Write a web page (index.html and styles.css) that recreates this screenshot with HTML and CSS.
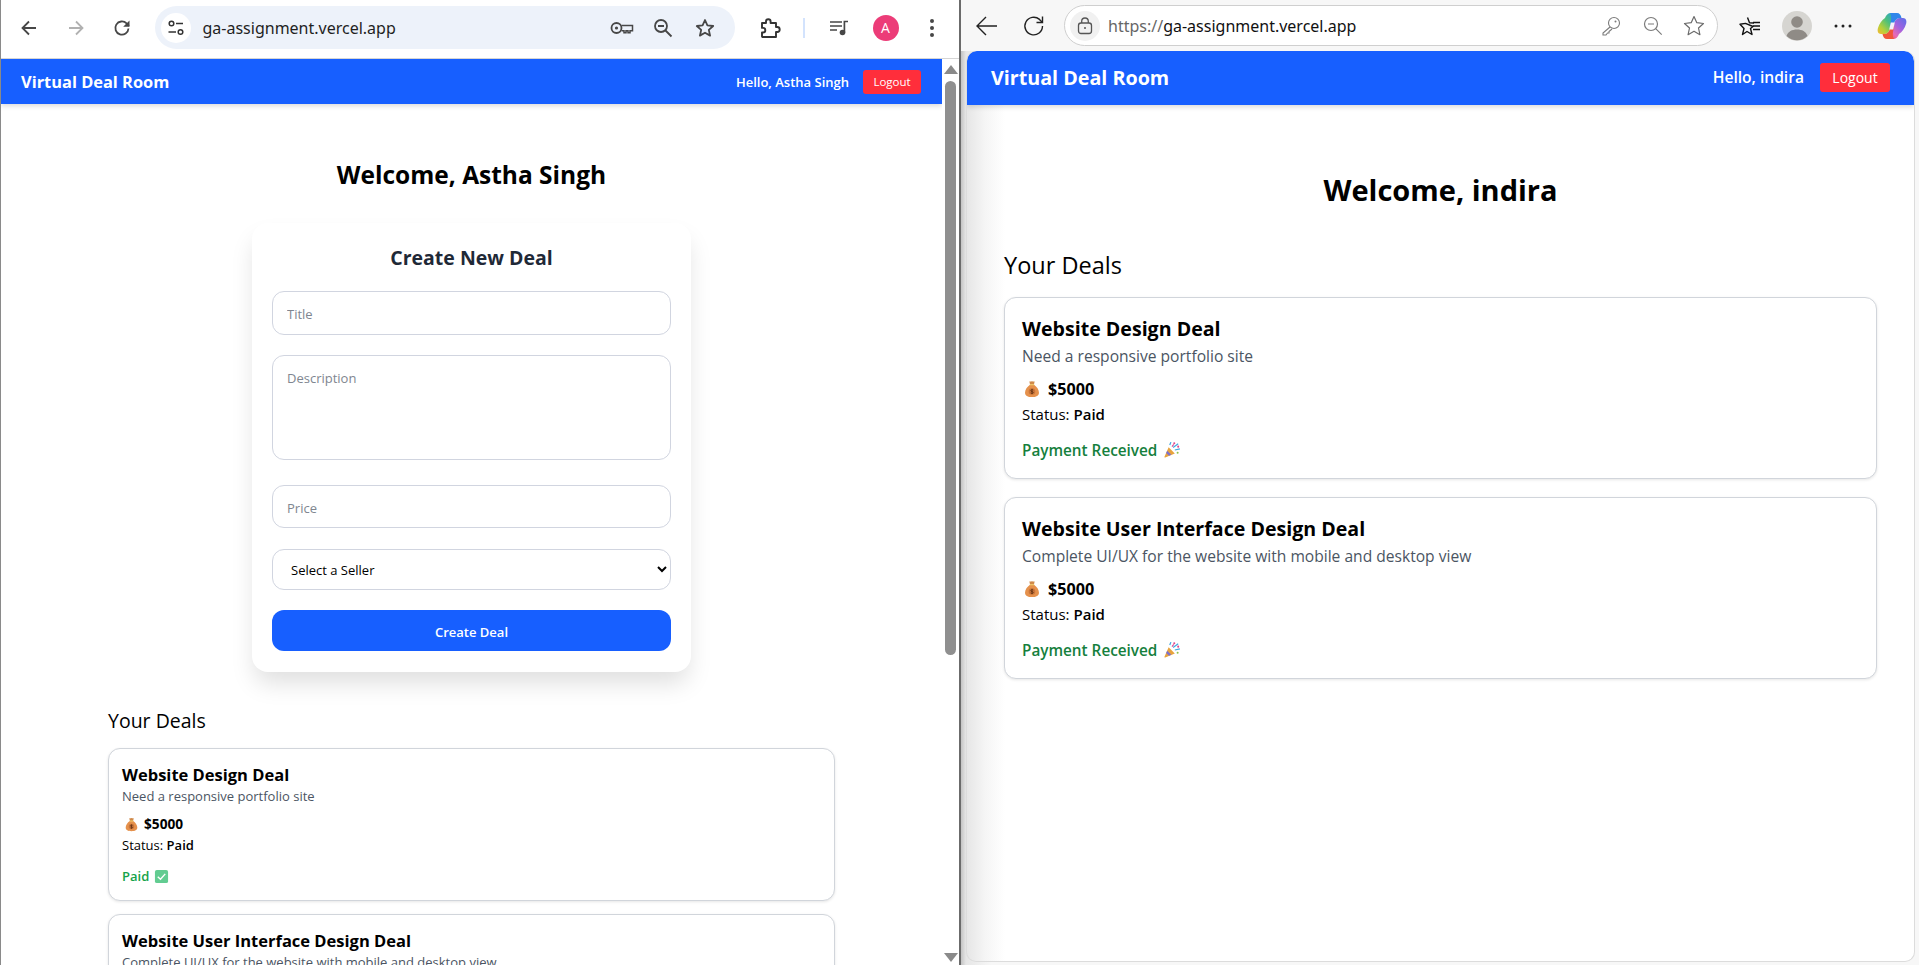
FILE: index.html
```html
<!DOCTYPE html>
<html lang="en">
<head>
  <meta charset="UTF-8" />
  <meta name="viewport" content="width=device-width, initial-scale=1.0" />
  <title>Virtual Deal Room</title>
  <link rel="stylesheet" href="styles.css">
</head>
<body>
  <svg class="defs" width="0" height="0" aria-hidden="true">
    <symbol id="money-bag" viewBox="0 0 16 16">
      <path d="M5.6 1.2c.8.5 1.6-.2 2.4-.2s1.6.7 2.4.2L9.7 4.2H6.3z" fill="#d08a4a"/>
      <path d="M6.2 4.3h3.6C12.3 6 14.2 8.7 14.2 11.3c0 2.8-2.5 3.9-6.2 3.9s-6.2-1.1-6.2-3.9C1.800 8.7 3.700 6 6.200 4.300z" fill="#e5914c"/>
      <rect x="6" y="3.7" width="4" height="1" rx=".5" fill="#f4cf6a"/>
      <circle cx="8" cy="10.2" r="2.9" fill="#c9743a"/>
      <path d="M9.1 9c-.6-.5-2.2-.5-2.2.5s2.2.6 2.2 1.600-1.700 1-2.300.4M8 7.900v4.600" fill="none" stroke="#5a2d10" stroke-width=".7"/>
    </symbol>
    <symbol id="party" viewBox="0 0 16 16">
      <path d="M5 5.500 10.500 11 2 14.700c-.5.200-.9-.2-.7-.7z" fill="#e8a33d"/>
      <path d="M3.700 8.600 7.400 12.300 5.400 13.200 2.800 10.600z" fill="#7b6fd0"/>
      <path d="M6 3.500 7 1M9 5.700 13.500 2.500M10.500 8 15 7" stroke="#3fa9e0" stroke-width="1.100" fill="none"/>
      <circle cx="10" cy="2" r=".9" fill="#e0458b"/>
      <circle cx="13.500" cy="5" r=".9" fill="#e0458b"/>
      <circle cx="13" cy="10.500" r=".9" fill="#8ac249"/>
      <path d="M8 5 9.500 3" stroke="#e0458b" stroke-width="1"/>
    </symbol>
    <symbol id="check-box" viewBox="0 0 16 16">
      <rect x="1" y="1" width="14" height="14" rx="2" fill="#62cc91"/>
      <path d="M4 8.300 6.900 11 12 5.200" fill="none" stroke="#fff" stroke-width="1.500"/>
    </symbol>
  </svg>

  <section class="window chrome-window">
    <header class="toolbar chrome-bar">
      <span class="tool"><svg width="20" height="20" viewBox="0 0 20 20"><path d="M17 10H4M10 3.500 3.500 10l6.500 6.500" fill="none" stroke="#474747" stroke-width="1.800"/></svg></span>
      <span class="tool"><svg width="20" height="20" viewBox="0 0 20 20"><path d="M3 10h13M10 3.500l6.500 6.500-6.500 6.500" fill="none" stroke="#b1b1b1" stroke-width="1.800"/></svg></span>
      <span class="tool"><svg width="20" height="20" viewBox="0 0 20 20"><path d="M16.500 10.500a6.600 6.600 0 1 1-1.900-5.100L17 7.800" fill="none" stroke="#474747" stroke-width="1.800"/><path d="M17.500 2.500v6.300h-6.300z" fill="#474747"/></svg></span>
      <div class="omnibox chrome-omni">
        <span class="site-info"><svg width="18" height="18" viewBox="0 0 18 18"><circle cx="4.500" cy="4.500" r="2.300" fill="none" stroke="#333" stroke-width="1.500"/><path d="M9 4.500h7M1.500 13H9" stroke="#333" stroke-width="1.500"/><circle cx="13.500" cy="13" r="2.300" fill="none" stroke="#333" stroke-width="1.500"/></svg></span>
        <span class="url chrome-url">ga-assignment.vercel.app</span>
        <span class="omni-icon"><svg width="24" height="16" viewBox="0 0 24 16"><circle cx="6.500" cy="8" r="5" fill="none" stroke="#474747" stroke-width="1.800"/><circle cx="6.500" cy="8" r="1.600" fill="#474747"/><path d="M11.500 5.500h11v5.200h-2.500v2h-2v-2h-2v2h-2v-2h-2.500" fill="none" stroke="#474747" stroke-width="1.500"/></svg></span>
        <span class="omni-icon"><svg width="20" height="20" viewBox="0 0 20 20"><circle cx="8" cy="8" r="6" fill="none" stroke="#474747" stroke-width="1.800"/><path d="M5 8h6M12.500 12.500l6 6" stroke="#474747" stroke-width="1.800"/></svg></span>
        <span class="omni-icon"><svg width="20" height="20" viewBox="0 0 20 20"><path d="m10 2 2.400 5.400 5.800.6-4.400 3.900 1.300 5.700L10 14.700l-5.100 2.900 1.300-5.700L1.800 8l5.800-.6z" fill="none" stroke="#474747" stroke-width="1.800" stroke-linejoin="round"/></svg></span>
      </div>
      <span class="tool ext-tool"><svg width="22" height="22" viewBox="0 0 22 22"><path d="M3 6h4V4.500a2.300 2.300 0 0 1 4.600 0V6h5.400v4h1.200a2.500 2.500 0 0 1 0 5H17v5H3.500l-.5-.5v-4h1a2.300 2.300 0 0 0 0-4.600H3z" fill="none" stroke="#333" stroke-width="1.900" stroke-linejoin="round"/></svg></span>
      <span class="tool-divider"></span>
      <span class="tool media-tool"><svg width="20" height="18" viewBox="0 0 20 18"><path d="M1 3h12M1 7h12M1 11h7" stroke="#474747" stroke-width="1.700"/><circle cx="13.500" cy="13.500" r="2.800" fill="#474747"/><path d="M15.400 13.500V2.500H19" fill="none" stroke="#474747" stroke-width="1.700"/></svg></span>
      <span class="avatar">A</span>
      <span class="tool dots-tool"><svg width="6" height="20" viewBox="0 0 6 20"><circle cx="3" cy="3" r="2" fill="#474747"/><circle cx="3" cy="10" r="2" fill="#474747"/><circle cx="3" cy="17" r="2" fill="#474747"/></svg></span>
    </header>

    <div class="chrome-page">
      <main class="page small-page">
        <nav class="navbar">
          <span class="brand">Virtual Deal Room</span>
          <div class="nav-user">
            <span class="hello">Hello, Astha Singh</span>
            <button class="logout">Logout</button>
          </div>
        </nav>
        <h1 class="welcome">Welcome, Astha Singh</h1>
        <form class="create-card">
          <h2>Create New Deal</h2>
          <input class="field field-title" type="text" placeholder="Title">
          <textarea class="field field-desc" placeholder="Description"></textarea>
          <input class="field field-price" type="text" placeholder="Price">
          <select class="field field-seller">
            <option>Select a Seller</option>
          </select>
          <button class="create-btn" type="button">Create Deal</button>
        </form>
        <section class="deals">
          <h3 class="deals-title">Your Deals</h3>
          <article class="deal">
            <h4>Website Design Deal</h4>
            <p class="desc">Need a responsive portfolio site</p>
            <p class="price"><svg class="emoji"><use href="#money-bag"/></svg>$5000</p>
            <p class="status">Status: <strong>Paid</strong></p>
            <p class="result paid">Paid <svg class="emoji"><use href="#check-box"/></svg></p>
          </article>
          <article class="deal">
            <h4>Website User Interface Design Deal</h4>
            <p class="desc">Complete UI/UX for the website with mobile and desktop view</p>
          </article>
        </section>
      </main>
      <aside class="scrollbar">
        <span class="arrow-up"></span>
        <span class="thumb"></span>
        <span class="arrow-down"></span>
      </aside>
    </div>
  </section>

  <section class="window edge-window">
    <header class="toolbar edge-bar">
      <span class="tool"><svg width="24" height="22" viewBox="0 0 24 22"><path d="M22 11H2M11 2l-9 9 9 9" fill="none" stroke="#222" stroke-width="1.400"/></svg></span>
      <span class="tool"><svg width="22" height="22" viewBox="0 0 22 22"><path d="M19.500 11a8.800 8.800 0 1 1-3-6.600L19 7" fill="none" stroke="#222" stroke-width="1.400"/><path d="M19.500 1.500V7.500H13.500" fill="none" stroke="#222" stroke-width="1.400"/></svg></span>
      <div class="omnibox edge-omni">
        <span class="site-info edge-lock"><svg width="16" height="18" viewBox="0 0 16 18"><rect x="1.500" y="6" width="13" height="10.500" rx="2.500" fill="none" stroke="#555" stroke-width="1.300"/><path d="M4.700 6V4.300a3.300 3.300 0 0 1 6.600 0V6" fill="none" stroke="#555" stroke-width="1.300"/><circle cx="8" cy="11" r="1" fill="#555"/></svg></span>
        <span class="url edge-url"><span class="scheme">https://</span>ga-assignment.vercel.app</span>
        <span class="omni-icon"><svg width="20" height="20" viewBox="0 0 20 20"><circle cx="13" cy="7" r="5.500" fill="none" stroke="#7b7b7b" stroke-width="1.100"/><circle cx="14.500" cy="5.500" r="1" fill="#7b7b7b"/><path d="m9 11-7 6v2h3l1.500-2h1.500v-1.500L11 13" fill="none" stroke="#7b7b7b" stroke-width="1.100"/></svg></span>
        <span class="omni-icon"><svg width="20" height="20" viewBox="0 0 20 20"><circle cx="8" cy="8" r="6.500" fill="none" stroke="#7b7b7b" stroke-width="1.200"/><path d="M5 8h6M12.700 12.700l6 6" stroke="#7b7b7b" stroke-width="1.200"/></svg></span>
        <span class="omni-icon"><svg width="22" height="22" viewBox="0 0 22 22"><path d="m11 1.500 2.800 6.200 6.700.8-5 4.500 1.400 6.700L11 16.300l-5.900 3.400 1.400-6.700-5-4.500 6.700-.8z" fill="none" stroke="#6b6b6b" stroke-width="1.200" stroke-linejoin="round"/></svg></span>
      </div>
      <span class="tool fav-tool"><svg width="22" height="20" viewBox="0 0 22 20"><path d="m8.500 1.500 2 5.200 4.500.3M14 10.500 11.500 12.500l1.500 6-5-3-4.500 3 1.500-6L1 8.300l5.500-.9z" fill="none" stroke="#111" stroke-width="1.400" stroke-linejoin="round"/><path d="M14 6.500h7M14 10h7M14 13.500h7" stroke="#111" stroke-width="1.300"/></svg></span>
      <span class="profile"><svg width="30" height="30" viewBox="0 0 30 30"><circle cx="15" cy="15" r="15" fill="#d6d5d1"/><circle cx="15" cy="11" r="5.800" fill="#8f8b86"/><path d="M4.500 25c1.500-4.500 5.500-6.500 10.500-6.500s9 2 10.500 6.500a15 15 0 0 1-21 0z" fill="#8f8b86"/></svg></span>
      <span class="tool edge-dots"><svg width="18" height="4" viewBox="0 0 18 4"><circle cx="2" cy="2" r="1.500" fill="#222"/><circle cx="9" cy="2" r="1.500" fill="#222"/><circle cx="16" cy="2" r="1.500" fill="#222"/></svg></span>
      <span class="copilot"><svg width="30" height="28" viewBox="0 0 30 28">
        <defs>
          <linearGradient id="cop-a" x1="1" y1="0" x2="0" y2="1"><stop offset="0" stop-color="#1f9be8"/><stop offset=".45" stop-color="#4fc07a"/><stop offset=".75" stop-color="#b5d03a"/><stop offset="1" stop-color="#f7b731"/></linearGradient>
          <linearGradient id="cop-b" x1="1" y1="0" x2="0" y2="1"><stop offset="0" stop-color="#5a6fe8"/><stop offset=".4" stop-color="#a062e0"/><stop offset=".7" stop-color="#e86ab4"/><stop offset="1" stop-color="#f04a30"/></linearGradient>
        </defs>
        <path d="M8 6C9 3 11 1 14 1h6c-2 1-3 3-4 6l-3 10c-1 3-3 5-6 5H4c-3 0-4-3-3-6 1-4 4-8 7-10z" fill="url(#cop-a)"/>
        <path d="M22 22c-1 3-3 5-6 5h-6c2-1 3-3 4-6l3-10c1-3 3-5 6-5h3c3 0 4 3 3 6-1 4-4 8-7 10z" fill="url(#cop-b)"/>
        <path d="M13 1h7c2.500 0 4 2 4.500 5H23c-3 0-5 2-6 5l-1 3h-3l1-6c.5-3 0-6-1-7z" fill="#2f86ea"/>
        <path d="M17 27h-7c-2.500 0-4-2-4.500-5H7c3 0 5-2 6-5l1-3h3l-1 6c-.5 3 0 6 1 7z" fill="#f0563a"/>
        <path d="M13.800 10.500h4l-1.600 7h-4z" fill="#f4f0fa"/>
      </svg></span>
    </header>

    <div class="edge-page">
      <main class="page large-page">
        <nav class="navbar">
          <span class="brand">Virtual Deal Room</span>
          <div class="nav-user">
            <span class="hello">Hello, indira</span>
            <button class="logout">Logout</button>
          </div>
        </nav>
        <h1 class="welcome">Welcome, indira</h1>
        <section class="deals">
          <h3 class="deals-title">Your Deals</h3>
          <article class="deal">
            <h4>Website Design Deal</h4>
            <p class="desc">Need a responsive portfolio site</p>
            <p class="price"><svg class="emoji"><use href="#money-bag"/></svg>$5000</p>
            <p class="status">Status: <strong>Paid</strong></p>
            <p class="result received">Payment Received <svg class="emoji"><use href="#party"/></svg></p>
          </article>
          <article class="deal">
            <h4>Website User Interface Design Deal</h4>
            <p class="desc">Complete UI/UX for the website with mobile and desktop view</p>
            <p class="price"><svg class="emoji"><use href="#money-bag"/></svg>$5000</p>
            <p class="status">Status: <strong>Paid</strong></p>
            <p class="result received">Payment Received <svg class="emoji"><use href="#party"/></svg></p>
          </article>
        </section>
      </main>
    </div>
  </section>
</body>
</html>
```

FILE: styles.css
```css
:root {
  --blue: #175fff;
  --red: #ff2e3b;
  --line: #d1d5db;
}

* {
  box-sizing: border-box;
}

body {
  margin: 0;
  height: 965px;
  display: flex;
  overflow: hidden;
  background: #fff;
  color: #000;
  font-family: "Open Sans", "Noto Sans", sans-serif;
}

.defs {
  position: absolute;
}

p, h1, h2, h3, h4 {
  margin: 0;
}

.window {
  display: flex;
  flex-direction: column;
  height: 965px;
}

.chrome-window {
  width: 961px;
  border-left: 1px solid #8a8a8a;
  border-right: 2px solid #6b6b6b;
}

.edge-window {
  flex: 1;
  background: #f7f7f7;
}

/* browser toolbars */
.toolbar {
  display: flex;
  align-items: center;
  flex-shrink: 0;
}

.chrome-bar {
  height: 59px;
  padding: 0 0 3px 5px;
  background: #fff;
  border-bottom: 1px solid #d5d5d5;
}

.edge-bar {
  height: 51px;
  padding-left: 3px;
  background: #f7f7f7;
}

.tool {
  width: 46.5px;
  height: 40px;
  display: flex;
  align-items: center;
  justify-content: center;
  flex-shrink: 0;
}

.omnibox {
  display: flex;
  align-items: center;
  border-radius: 22px;
}

.chrome-omni {
  width: 580px;
  height: 43px;
  margin-left: 9px;
  padding: 0 9px 0 6px;
  background: #edf2fa;
}

.edge-omni {
  width: 654px;
  height: 41px;
  margin-left: 7px;
  padding: 0 2px 0 5px;
  background: #fff;
  border: 1px solid #cfcfcf;
}

.site-info {
  width: 30px;
  height: 30px;
  border-radius: 50%;
  background: #fff;
  display: flex;
  align-items: center;
  justify-content: center;
  flex-shrink: 0;
}

.edge-lock {
  background: #f1f1f1;
}

.url {
  flex: 1;
  font-family: "Noto Sans", sans-serif;
  white-space: nowrap;
}

.chrome-url {
  margin-left: 12px;
  font-size: 16px;
  color: #1f1f1f;
}

.edge-url {
  margin-left: 8px;
  font-size: 16px;
  color: #111;
}

.scheme {
  color: #666;
}

.omni-icon {
  width: 41.5px;
  display: flex;
  justify-content: center;
}

.ext-tool {
  margin-left: 12px;
}

.tool-divider {
  width: 2px;
  height: 20px;
  margin-left: 10px;
  background: #d3e3fd;
}

.media-tool {
  margin-left: 11px;
}

.avatar {
  width: 26px;
  height: 26px;
  margin-left: 10px;
  border-radius: 50%;
  background: #ec3c78;
  color: #fff;
  font-size: 14px;
  line-height: 26px;
  text-align: center;
}

.dots-tool {
  width: 20px;
  margin-left: 23px;
}

.fav-tool {
  margin-left: 9px;
}

.profile {
  display: flex;
  margin-left: 8px;
}

.edge-dots {
  margin-left: 8px;
}

.copilot {
  display: flex;
  margin-left: 11px;
}

/* page frames */
.chrome-page {
  flex: 1;
  display: flex;
  min-height: 0;
}

.edge-page {
  flex: 1;
  min-height: 0;
  padding: 0 4px 3px 5px;
  background: linear-gradient(to right, #c4c4c4 0, #e6e6e6 5px, #f7f7f7 30px);
}

.page {
  overflow: hidden;
  background: #fff;
}

.small-page {
  flex: 1;
}

.large-page {
  height: 100%;
  border-radius: 10px;
  border: 1px solid #dcdcdc;
  border-top: 0;
  background: linear-gradient(to right, #e6e6e6 0, #f5f5f5 18px, #fff 38px);
}

/* scrollbar of the left window */
.scrollbar {
  width: 17px;
  display: flex;
  flex-direction: column;
  align-items: center;
  padding: 6px 0 3px;
  background: #fff;
  flex-shrink: 0;
}

.arrow-up, .arrow-down {
  width: 0;
  height: 0;
  border-left: 7px solid transparent;
  border-right: 7px solid transparent;
}

.arrow-up {
  border-bottom: 9px solid #8a8a8a;
}

.arrow-down {
  margin-top: auto;
  border-top: 9px solid #8a8a8a;
}

.thumb {
  width: 11px;
  height: 574px;
  margin-top: 7px;
  border-radius: 6px;
  background: #8f8f8f;
}

/* app navbar */
.navbar {
  display: flex;
  align-items: center;
  justify-content: space-between;
  background: var(--blue);
  color: #fff;
  box-shadow: 0 2px 5px rgba(0, 0, 0, 0.15);
}

.small-page .navbar {
  height: 45px;
  padding: 0 21px 0 20px;
}

.large-page .navbar {
  height: 54px;
  padding: 0 24px 2px;
  border-radius: 10px 10px 0 0;
}

.brand {
  font-weight: 700;
}

.small-page .brand {
  font-size: 16.4px;
}

.large-page .brand {
  font-size: 19.7px;
}

.nav-user {
  display: flex;
  align-items: center;
}

.hello {
  font-weight: 600;
}

.small-page .hello {
  font-size: 13px;
}

.large-page .hello {
  font-size: 15.6px;
}

.logout {
  border: 0;
  border-radius: 3px;
  background: var(--red);
  color: #fff;
  font-family: inherit;
  padding: 0;
}

.small-page .logout {
  width: 58px;
  height: 24px;
  margin-left: 14px;
  font-size: 11.5px;
}

.large-page .logout {
  width: 70px;
  height: 29px;
  margin-left: 16px;
  font-size: 14px;
}

/* headings */
.welcome {
  text-align: center;
  font-weight: 700;
}

.small-page .welcome {
  margin-top: 53px;
  font-size: 24.5px;
  line-height: 36px;
}

.large-page .welcome {
  margin-top: 63px;
  font-size: 29px;
  line-height: 44px;
}

/* create form */
.create-card {
  width: 439px;
  height: 449px;
  margin: 30px auto 0;
  padding: 20px 20px 0;
  border-radius: 16px;
  background: #fff;
  box-shadow: 0 14px 24px -3px rgba(0, 0, 0, 0.13);
  display: flex;
  flex-direction: column;
}

.create-card h2 {
  text-align: center;
  font-size: 19.5px;
  line-height: 30px;
  color: #1f2937;
}

.field {
  width: 100%;
  border: 1px solid #d1d5e0;
  border-radius: 12px;
  background: #fff;
  font-family: inherit;
  font-size: 13px;
  padding: 0 14px;
  outline: none;
  flex-shrink: 0;
}

.field::placeholder {
  color: #808690;
}

.field-title {
  height: 44px;
  margin-top: 18px;
  padding-top: 1px;
}

.field-desc {
  height: 105px;
  margin-top: 20px;
  padding-top: 13px;
  resize: none;
}

.field-price {
  height: 43px;
  margin-top: 25px;
  padding-top: 2px;
}

.field-seller {
  height: 41px;
  margin-top: 21px;
  color: #000;
}

.create-btn {
  height: 41px;
  margin-top: 20px;
  padding: 3px 0 0;
  border: 0;
  border-radius: 12px;
  background: var(--blue);
  color: #fff;
  font-family: inherit;
  font-weight: 600;
  font-size: 13px;
  flex-shrink: 0;
}

/* deal lists */
.deal {
  background: #fff;
  border: 1.5px solid var(--line);
  border-radius: 12px;
  box-shadow: 0 1px 3px rgba(0, 0, 0, 0.1);
}

.deal h4 {
  font-weight: 700;
}

.desc {
  color: #4b5563;
}

.price {
  display: flex;
  align-items: center;
  font-weight: 700;
}

.status strong {
  font-weight: 600;
}

.result {
  display: flex;
  align-items: center;
  font-weight: 600;
}

.paid {
  color: #16a34a;
}

.received {
  color: #15803d;
}

.small-page .deals {
  width: 727px;
  margin: 35px auto 0;
}

.small-page .deals-title {
  font-size: 19.5px;
  line-height: 28px;
  font-weight: 400;
}

.small-page .deal {
  height: 153px;
  margin-top: 13px;
  padding: 13px 14px 0 13px;
}

.small-page .deal h4 {
  font-size: 16.5px;
  line-height: 25px;
}

.small-page .desc {
  font-size: 13px;
  line-height: 18px;
}

.small-page .price {
  margin-top: 8px;
  font-size: 13.7px;
  line-height: 22px;
}

.small-page .status {
  font-size: 13px;
  line-height: 21px;
}

.small-page .result {
  margin-top: 9px;
  font-size: 13px;
  line-height: 22px;
}

.small-page .emoji {
  width: 15px;
  height: 15px;
}

.small-page .price .emoji {
  margin: 0 5px 0 2px;
}

.small-page .result .emoji {
  margin-left: 5px;
}

.large-page .deals {
  padding: 0 37px;
  margin-top: 36px;
}

.large-page .deals-title {
  font-size: 23.5px;
  line-height: 34px;
  font-weight: 400;
}

.large-page .deal {
  height: 182px;
  margin-top: 15px;
  padding: 17px 17px 0;
}

.large-page .deal + .deal {
  margin-top: 18px;
}

.large-page .deal h4 {
  font-size: 19.6px;
  line-height: 28px;
}

.large-page .desc {
  margin-top: 2px;
  font-size: 15.6px;
  line-height: 22px;
}

.large-page .price {
  margin-top: 10px;
  font-size: 16.2px;
  line-height: 24px;
}

.large-page .status {
  margin-top: 1px;
  font-size: 15px;
  line-height: 25px;
}

.large-page .result {
  margin-top: 11px;
  font-size: 15.3px;
  line-height: 24px;
}

.large-page .emoji {
  width: 18px;
  height: 18px;
}

.large-page .price .emoji {
  margin: 0 7px 0 1px;
}

.large-page .result .emoji {
  margin-left: 6px;
}
```
